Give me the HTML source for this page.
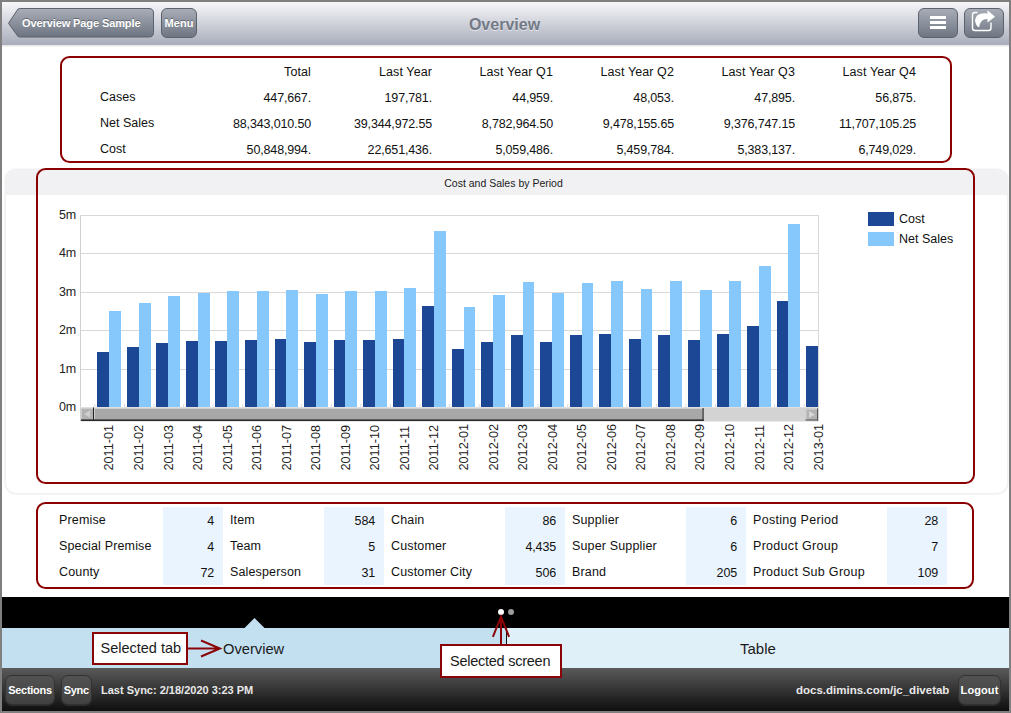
<!DOCTYPE html>
<html><head><meta charset="utf-8"><title>Overview</title>
<style>
html,body{margin:0;padding:0;}
body{width:1011px;height:713px;position:relative;overflow:hidden;background:#7f7f7f;font-family:"Liberation Sans",sans-serif;}
#app{position:absolute;left:2px;top:2px;width:1007px;height:708.5px;background:#fff;overflow:hidden;}
.abs{position:absolute;}
#hdr{position:absolute;left:2px;top:2px;width:1007px;height:43px;background:linear-gradient(#f7f7fa,#a8adba);}
#title{position:absolute;left:-1px;width:1011px;top:15px;text-align:center;font-weight:bold;font-size:16px;color:#737987;text-shadow:0 1px 0 rgba(255,255,255,.6);line-height:20px;}
.btn{position:absolute;box-sizing:border-box;border:1px solid #5b616d;border-radius:6px;background:linear-gradient(#a7acb6,#6f7683);color:#fff;font-weight:bold;font-size:12px;text-align:center;text-shadow:0 -1px 0 rgba(0,0,0,.35);}
.t{position:absolute;font-size:12.5px;line-height:18px;color:#111;white-space:nowrap;}
.t.r{width:150px;text-align:right;letter-spacing:-0.15px;}
.box{position:absolute;box-sizing:border-box;border:2px solid #8b0000;border-radius:9.5px;}
.dbtn{position:absolute;box-sizing:border-box;border:1px solid #333;border-radius:7px;background:linear-gradient(#525252,#414141);color:#fff;font-weight:bold;font-size:11px;letter-spacing:-0.3px;text-align:center;line-height:28px;box-shadow:0 1px 0 rgba(255,255,255,.08);}
.bt{position:absolute;color:#e8e8e8;font-weight:bold;white-space:nowrap;}
.call{position:absolute;box-sizing:border-box;border:2px solid #8b0508;background:#fff;font-size:14.5px;color:#1a1a1a;white-space:nowrap;}
</style></head><body>
<div id="app"></div>
<div id="hdr"></div>
<div class="abs" style="left:2px;top:45px;width:1007px;height:2px;background:linear-gradient(#e3e3e7,#f6f6f6);"></div>
<div id="title">Overview</div>
<!-- back button -->
<svg class="abs" style="left:0;top:0" width="210" height="46" viewBox="0 0 210 46">
<defs><linearGradient id="bg1" x1="0" y1="0" x2="0" y2="1"><stop offset="0" stop-color="#a9aeb8"/><stop offset="1" stop-color="#6d7481"/></linearGradient></defs>
<path d="M8.5 23.3 L18 9 Q19 8.5 21 8.5 L149 8.5 Q153.500 8.5 153.500 13 L153.500 32.500 Q153.500 37 149 37 L21 37 Q19 37 18 36.500 Z" fill="url(#bg1)" stroke="#5b616d" stroke-width="1"/>
</svg>
<div class="abs" style="left:22px;top:9px;height:29px;line-height:29px;color:#fff;font-weight:bold;font-size:11px;letter-spacing:-0.1px;text-shadow:0 -1px 0 rgba(0,0,0,.35);white-space:nowrap">Overview Page Sample</div>
<div class="btn" style="left:161px;top:8px;width:36px;height:30px;line-height:28px;font-size:11px;letter-spacing:0.1px;">Menu</div>
<div class="btn" style="left:918px;top:8px;width:40px;height:30px;"></div>
<div class="btn" style="left:964px;top:8px;width:40px;height:30px;"></div>
<svg class="abs" style="left:918px;top:8px" width="90" height="30" viewBox="0 0 90 30">
<rect x="12" y="8" width="16" height="3" fill="#fff"/><rect x="12" y="13" width="16" height="3" fill="#fff"/><rect x="12" y="18" width="16" height="3" fill="#fff"/>
<path d="M59.500 4.500 L57 4.500 Q54.500 4.500 54.500 7 L54.500 20 Q54.500 22.500 57 22.500 L70.500 22.500 Q73 22.500 73 20 L73 14.500" fill="none" stroke="#fff" stroke-width="1.4"/>
<path d="M69.500 2.200 L77 8.800 L69.500 14.500 L69.500 11 Q62.500 10.500 61.200 19 L60 19 Q55.500 14 58 9 Q61 4.500 69.500 5.500 Z" fill="#fff"/>
</svg>

<!-- top table -->
<div class="box" style="left:60px;top:56px;width:892px;height:107px;"></div>
<div class="t" style="left:100px;top:87.6px">Cases</div>
<div class="t" style="left:100px;top:113.6px">Net Sales</div>
<div class="t" style="left:100px;top:139.6px">Cost</div>
<div class="t r" style="left:161px;top:62.6px;letter-spacing:0.1px">Total</div>
<div class="t r" style="left:161px;top:88.5px">447,667.</div>
<div class="t r" style="left:161px;top:114.5px">88,343,010.50</div>
<div class="t r" style="left:161px;top:140.5px">50,848,994.</div>
<div class="t r" style="left:282px;top:62.6px;letter-spacing:0.1px">Last Year</div>
<div class="t r" style="left:282px;top:88.5px">197,781.</div>
<div class="t r" style="left:282px;top:114.5px">39,344,972.55</div>
<div class="t r" style="left:282px;top:140.5px">22,651,436.</div>
<div class="t r" style="left:403px;top:62.6px;letter-spacing:0.1px">Last Year Q1</div>
<div class="t r" style="left:403px;top:88.5px">44,959.</div>
<div class="t r" style="left:403px;top:114.5px">8,782,964.50</div>
<div class="t r" style="left:403px;top:140.5px">5,059,486.</div>
<div class="t r" style="left:524px;top:62.6px;letter-spacing:0.1px">Last Year Q2</div>
<div class="t r" style="left:524px;top:88.5px">48,053.</div>
<div class="t r" style="left:524px;top:114.5px">9,478,155.65</div>
<div class="t r" style="left:524px;top:140.5px">5,459,784.</div>
<div class="t r" style="left:645px;top:62.6px;letter-spacing:0.1px">Last Year Q3</div>
<div class="t r" style="left:645px;top:88.5px">47,895.</div>
<div class="t r" style="left:645px;top:114.5px">9,376,747.15</div>
<div class="t r" style="left:645px;top:140.5px">5,383,137.</div>
<div class="t r" style="left:766px;top:62.6px;letter-spacing:0.1px">Last Year Q4</div>
<div class="t r" style="left:766px;top:88.5px">56,875.</div>
<div class="t r" style="left:766px;top:114.5px">11,707,105.25</div>
<div class="t r" style="left:766px;top:140.5px">6,749,029.</div>

<!-- chart panel -->
<div class="abs" style="left:5.500px;top:170px;width:1001px;height:322.500px;background:#fff;border-radius:10px;box-shadow:0 0 0 1.500px #f0f0f3;"></div>
<div class="abs" style="left:5.500px;top:170px;width:1001px;height:25px;background:#f1f1f4;border-radius:10px 10px 0 0;"></div>
<div class="abs" style="left:-2px;width:1011px;top:176px;text-align:center;font-size:10.5px;line-height:14px;color:#1a1a1a;">Cost and Sales by Period</div>
<svg id="chart" width="1011" height="713" viewBox="0 0 1011 713" style="position:absolute;left:0;top:0">
<rect x="80" y="215" width="739" height="192" fill="#fff"/>
<rect x="80" y="215" width="739" height="1" fill="#d8d8d8"/>
<rect x="80" y="253" width="739" height="1" fill="#d8d8d8"/>
<rect x="80" y="292" width="739" height="1" fill="#d8d8d8"/>
<rect x="80" y="330" width="739" height="1" fill="#d8d8d8"/>
<rect x="80" y="369" width="739" height="1" fill="#d8d8d8"/>
<rect x="80" y="215" width="1" height="206" fill="#d0d0d0"/>
<rect x="818" y="215" width="1" height="193" fill="#d8d8d8"/>
<rect x="80" y="407" width="739" height="1" fill="#e0e0e0"/>
<rect x="97" y="352" width="12" height="55" fill="#1b4795"/>
<rect x="109" y="311" width="12" height="96" fill="#86c8fb"/>
<rect x="127" y="347" width="12" height="60" fill="#1b4795"/>
<rect x="139" y="303" width="12" height="104" fill="#86c8fb"/>
<rect x="156" y="343" width="12" height="64" fill="#1b4795"/>
<rect x="168" y="296" width="12" height="111" fill="#86c8fb"/>
<rect x="186" y="341" width="12" height="66" fill="#1b4795"/>
<rect x="198" y="293" width="12" height="114" fill="#86c8fb"/>
<rect x="215" y="341" width="12" height="66" fill="#1b4795"/>
<rect x="227" y="291" width="12" height="116" fill="#86c8fb"/>
<rect x="245" y="340" width="12" height="67" fill="#1b4795"/>
<rect x="257" y="291" width="12" height="116" fill="#86c8fb"/>
<rect x="275" y="339" width="11" height="68" fill="#1b4795"/>
<rect x="286" y="290" width="12" height="117" fill="#86c8fb"/>
<rect x="304" y="342" width="12" height="65" fill="#1b4795"/>
<rect x="316" y="294" width="12" height="113" fill="#86c8fb"/>
<rect x="334" y="340" width="11" height="67" fill="#1b4795"/>
<rect x="345" y="291" width="12" height="116" fill="#86c8fb"/>
<rect x="363" y="340" width="12" height="67" fill="#1b4795"/>
<rect x="375" y="291" width="12" height="116" fill="#86c8fb"/>
<rect x="393" y="339" width="11" height="68" fill="#1b4795"/>
<rect x="404" y="288" width="12" height="119" fill="#86c8fb"/>
<rect x="422" y="306" width="12" height="101" fill="#1b4795"/>
<rect x="434" y="231" width="12" height="176" fill="#86c8fb"/>
<rect x="452" y="349" width="12" height="58" fill="#1b4795"/>
<rect x="464" y="307" width="11" height="100" fill="#86c8fb"/>
<rect x="481" y="342" width="12" height="65" fill="#1b4795"/>
<rect x="493" y="295" width="12" height="112" fill="#86c8fb"/>
<rect x="511" y="335" width="12" height="72" fill="#1b4795"/>
<rect x="523" y="282" width="11" height="125" fill="#86c8fb"/>
<rect x="540" y="342" width="12" height="65" fill="#1b4795"/>
<rect x="552" y="293" width="12" height="114" fill="#86c8fb"/>
<rect x="570" y="335" width="12" height="72" fill="#1b4795"/>
<rect x="582" y="283" width="11" height="124" fill="#86c8fb"/>
<rect x="599" y="334" width="12" height="73" fill="#1b4795"/>
<rect x="611" y="281" width="12" height="126" fill="#86c8fb"/>
<rect x="629" y="339" width="12" height="68" fill="#1b4795"/>
<rect x="641" y="289" width="11" height="118" fill="#86c8fb"/>
<rect x="658" y="335" width="12" height="72" fill="#1b4795"/>
<rect x="670" y="281" width="12" height="126" fill="#86c8fb"/>
<rect x="688" y="340" width="12" height="67" fill="#1b4795"/>
<rect x="700" y="290" width="12" height="117" fill="#86c8fb"/>
<rect x="717" y="334" width="12" height="73" fill="#1b4795"/>
<rect x="729" y="281" width="12" height="126" fill="#86c8fb"/>
<rect x="747" y="326" width="12" height="81" fill="#1b4795"/>
<rect x="759" y="266" width="12" height="141" fill="#86c8fb"/>
<rect x="777" y="301" width="11" height="106" fill="#1b4795"/>
<rect x="788" y="224" width="12" height="183" fill="#86c8fb"/>
<rect x="806" y="346" width="12" height="61" fill="#1b4795"/>
<rect x="94.4" y="404" width="1" height="3" fill="#dcdcdc"/>
<rect x="124.0" y="404" width="1" height="3" fill="#dcdcdc"/>
<rect x="153.5" y="404" width="1" height="3" fill="#dcdcdc"/>
<rect x="183.1" y="404" width="1" height="3" fill="#dcdcdc"/>
<rect x="212.6" y="404" width="1" height="3" fill="#dcdcdc"/>
<rect x="242.2" y="404" width="1" height="3" fill="#dcdcdc"/>
<rect x="271.7" y="404" width="1" height="3" fill="#dcdcdc"/>
<rect x="301.2" y="404" width="1" height="3" fill="#dcdcdc"/>
<rect x="330.8" y="404" width="1" height="3" fill="#dcdcdc"/>
<rect x="360.4" y="404" width="1" height="3" fill="#dcdcdc"/>
<rect x="389.9" y="404" width="1" height="3" fill="#dcdcdc"/>
<rect x="419.5" y="404" width="1" height="3" fill="#dcdcdc"/>
<rect x="449.0" y="404" width="1" height="3" fill="#dcdcdc"/>
<rect x="478.6" y="404" width="1" height="3" fill="#dcdcdc"/>
<rect x="508.1" y="404" width="1" height="3" fill="#dcdcdc"/>
<rect x="537.6" y="404" width="1" height="3" fill="#dcdcdc"/>
<rect x="567.2" y="404" width="1" height="3" fill="#dcdcdc"/>
<rect x="596.8" y="404" width="1" height="3" fill="#dcdcdc"/>
<rect x="626.3" y="404" width="1" height="3" fill="#dcdcdc"/>
<rect x="655.9" y="404" width="1" height="3" fill="#dcdcdc"/>
<rect x="685.4" y="404" width="1" height="3" fill="#dcdcdc"/>
<rect x="715.0" y="404" width="1" height="3" fill="#dcdcdc"/>
<rect x="744.5" y="404" width="1" height="3" fill="#dcdcdc"/>
<rect x="774.0" y="404" width="1" height="3" fill="#dcdcdc"/>
<rect x="803.6" y="404" width="1" height="3" fill="#dcdcdc"/>
<rect x="81" y="408" width="738" height="13.5" fill="#d3d3d3"/>
<rect x="94" y="408" width="609" height="12" fill="#a8a8a8"/>
<rect x="94" y="408" width="609" height="1" fill="#cfcfcf"/>
<rect x="94" y="408" width="1" height="12" fill="#cfcfcf"/>
<rect x="81" y="408" width="12" height="12" fill="#b2b2b2"/>
<rect x="81" y="408" width="12" height="1" fill="#cdcdcd"/>
<rect x="81" y="408" width="1" height="12" fill="#cdcdcd"/>
<rect x="93" y="407.5" width="1" height="13" fill="#222"/>
<rect x="702.5" y="408" width="1.2" height="13" fill="#333"/>
<rect x="81" y="419.4" width="622.7" height="1.6" fill="#2c2c2c"/>
<rect x="805.5" y="408.5" width="12" height="12" fill="#b2b2b2"/>
<rect x="805.5" y="408.5" width="12" height="1" fill="#d8d8d8"/>
<rect x="805.5" y="408.5" width="1" height="12" fill="#d8d8d8"/>
<rect x="805.5" y="419.5" width="12.5" height="1" fill="#555"/>
<rect x="817" y="408.5" width="1" height="12" fill="#555"/>
<path d="M90 410.5 L84 414 L90 417.5 Z" fill="#cfcfcf"/>
<path d="M809 411 L815 414.5 L809 418 Z" fill="#d6d6d6"/>
<text x="76.3" y="219" text-anchor="end" font-family="Liberation Sans, sans-serif" font-size="12.5" fill="#222">5m</text>
<text x="76.3" y="257" text-anchor="end" font-family="Liberation Sans, sans-serif" font-size="12.5" fill="#222">4m</text>
<text x="76.3" y="296" text-anchor="end" font-family="Liberation Sans, sans-serif" font-size="12.5" fill="#222">3m</text>
<text x="76.3" y="334" text-anchor="end" font-family="Liberation Sans, sans-serif" font-size="12.5" fill="#222">2m</text>
<text x="76.3" y="373" text-anchor="end" font-family="Liberation Sans, sans-serif" font-size="12.5" fill="#222">1m</text>
<text x="76.3" y="411" text-anchor="end" font-family="Liberation Sans, sans-serif" font-size="12.5" fill="#222">0m</text>
<text transform="translate(113.4,470.5) rotate(-90)" font-family="Liberation Sans, sans-serif" font-size="12.7" fill="#222">2011-01</text>
<text transform="translate(143.0,470.5) rotate(-90)" font-family="Liberation Sans, sans-serif" font-size="12.7" fill="#222">2011-02</text>
<text transform="translate(172.5,470.5) rotate(-90)" font-family="Liberation Sans, sans-serif" font-size="12.7" fill="#222">2011-03</text>
<text transform="translate(202.1,470.5) rotate(-90)" font-family="Liberation Sans, sans-serif" font-size="12.7" fill="#222">2011-04</text>
<text transform="translate(231.6,470.5) rotate(-90)" font-family="Liberation Sans, sans-serif" font-size="12.7" fill="#222">2011-05</text>
<text transform="translate(261.1,470.5) rotate(-90)" font-family="Liberation Sans, sans-serif" font-size="12.7" fill="#222">2011-06</text>
<text transform="translate(290.7,470.5) rotate(-90)" font-family="Liberation Sans, sans-serif" font-size="12.7" fill="#222">2011-07</text>
<text transform="translate(320.2,470.5) rotate(-90)" font-family="Liberation Sans, sans-serif" font-size="12.7" fill="#222">2011-08</text>
<text transform="translate(349.8,470.5) rotate(-90)" font-family="Liberation Sans, sans-serif" font-size="12.7" fill="#222">2011-09</text>
<text transform="translate(379.3,470.5) rotate(-90)" font-family="Liberation Sans, sans-serif" font-size="12.7" fill="#222">2011-10</text>
<text transform="translate(408.9,470.5) rotate(-90)" font-family="Liberation Sans, sans-serif" font-size="12.7" fill="#222">2011-11</text>
<text transform="translate(438.4,470.5) rotate(-90)" font-family="Liberation Sans, sans-serif" font-size="12.7" fill="#222">2011-12</text>
<text transform="translate(468.0,470.5) rotate(-90)" font-family="Liberation Sans, sans-serif" font-size="12.7" fill="#222">2012-01</text>
<text transform="translate(497.6,470.5) rotate(-90)" font-family="Liberation Sans, sans-serif" font-size="12.7" fill="#222">2012-02</text>
<text transform="translate(527.1,470.5) rotate(-90)" font-family="Liberation Sans, sans-serif" font-size="12.7" fill="#222">2012-03</text>
<text transform="translate(556.6,470.5) rotate(-90)" font-family="Liberation Sans, sans-serif" font-size="12.7" fill="#222">2012-04</text>
<text transform="translate(586.2,470.5) rotate(-90)" font-family="Liberation Sans, sans-serif" font-size="12.7" fill="#222">2012-05</text>
<text transform="translate(615.8,470.5) rotate(-90)" font-family="Liberation Sans, sans-serif" font-size="12.7" fill="#222">2012-06</text>
<text transform="translate(645.3,470.5) rotate(-90)" font-family="Liberation Sans, sans-serif" font-size="12.7" fill="#222">2012-07</text>
<text transform="translate(674.9,470.5) rotate(-90)" font-family="Liberation Sans, sans-serif" font-size="12.7" fill="#222">2012-08</text>
<text transform="translate(704.4,470.5) rotate(-90)" font-family="Liberation Sans, sans-serif" font-size="12.7" fill="#222">2012-09</text>
<text transform="translate(734.0,470.5) rotate(-90)" font-family="Liberation Sans, sans-serif" font-size="12.7" fill="#222">2012-10</text>
<text transform="translate(763.5,470.5) rotate(-90)" font-family="Liberation Sans, sans-serif" font-size="12.7" fill="#222">2012-11</text>
<text transform="translate(793.0,470.5) rotate(-90)" font-family="Liberation Sans, sans-serif" font-size="12.7" fill="#222">2012-12</text>
<text transform="translate(822.6,470.5) rotate(-90)" font-family="Liberation Sans, sans-serif" font-size="12.7" fill="#222">2013-01</text>
<rect x="868" y="212" width="26" height="14" fill="#1b4795"/>
<rect x="868" y="232" width="26" height="14" fill="#86c8fb"/>
</svg>
<div class="t" style="left:899px;top:209.700px;">Cost</div>
<div class="t" style="left:899px;top:229.500px;">Net Sales</div>
<div class="box" style="left:36px;top:168px;width:939px;height:316px;"></div>

<!-- bottom table -->
<div class="box" style="left:36px;top:502px;width:938px;height:87px;"></div>
<div style="position:absolute;left:163px;top:507px;width:60px;height:78px;background:#eaf4fe"></div>
<div class="t" style="left:59px;top:511.3px;letter-spacing:0.15px">Premise</div>
<div class="t r" style="left:64.0px;top:512.1px">4</div>
<div class="t" style="left:59px;top:537.3px;letter-spacing:0.15px">Special Premise</div>
<div class="t r" style="left:64.0px;top:538.1px">4</div>
<div class="t" style="left:59px;top:563.3px;letter-spacing:0.15px">County</div>
<div class="t r" style="left:64.0px;top:564.1px">72</div>
<div style="position:absolute;left:324px;top:507px;width:60px;height:78px;background:#eaf4fe"></div>
<div class="t" style="left:230px;top:511.3px;letter-spacing:0.15px">Item</div>
<div class="t r" style="left:225.0px;top:512.1px">584</div>
<div class="t" style="left:230px;top:537.3px;letter-spacing:0.15px">Team</div>
<div class="t r" style="left:225.0px;top:538.1px">5</div>
<div class="t" style="left:230px;top:563.3px;letter-spacing:0.15px">Salesperson</div>
<div class="t r" style="left:225.0px;top:564.1px">31</div>
<div style="position:absolute;left:505px;top:507px;width:60px;height:78px;background:#eaf4fe"></div>
<div class="t" style="left:391px;top:511.3px;letter-spacing:0.15px">Chain</div>
<div class="t r" style="left:406.0px;top:512.1px">86</div>
<div class="t" style="left:391px;top:537.3px;letter-spacing:0.15px">Customer</div>
<div class="t r" style="left:406.0px;top:538.1px">4,435</div>
<div class="t" style="left:391px;top:563.3px;letter-spacing:0.15px">Customer City</div>
<div class="t r" style="left:406.0px;top:564.1px">506</div>
<div style="position:absolute;left:686px;top:507px;width:60px;height:78px;background:#eaf4fe"></div>
<div class="t" style="left:572px;top:511.3px;letter-spacing:0.15px">Supplier</div>
<div class="t r" style="left:587.0px;top:512.1px">6</div>
<div class="t" style="left:572px;top:537.3px;letter-spacing:0.15px">Super Supplier</div>
<div class="t r" style="left:587.0px;top:538.1px">6</div>
<div class="t" style="left:572px;top:563.3px;letter-spacing:0.15px">Brand</div>
<div class="t r" style="left:587.0px;top:564.1px">205</div>
<div style="position:absolute;left:887px;top:507px;width:60px;height:78px;background:#eaf4fe"></div>
<div class="t" style="left:753px;top:511.3px;letter-spacing:0.30px">Posting Period</div>
<div class="t r" style="left:788.0px;top:512.1px">28</div>
<div class="t" style="left:753px;top:537.3px;letter-spacing:0.30px">Product Group</div>
<div class="t r" style="left:788.0px;top:538.1px">7</div>
<div class="t" style="left:753px;top:563.3px;letter-spacing:0.30px">Product Sub Group</div>
<div class="t r" style="left:788.0px;top:564.1px">109</div>

<!-- black bar -->
<div class="abs" style="left:2px;top:597px;width:1007px;height:31px;background:#000;"></div>
<div class="abs" style="left:498.200px;top:609.200px;width:5.600px;height:5.600px;border-radius:3px;background:#fff;"></div>
<div class="abs" style="left:508.300px;top:609.300px;width:5.400px;height:5.400px;border-radius:3px;background:#9c9c9c;"></div>
<!-- tab bar -->
<div class="abs" style="left:2px;top:628px;width:504px;height:40px;background:#c3e0f1;"></div>
<div class="abs" style="left:506px;top:628px;width:503px;height:40px;background:#e0f0f8;border-left:1px solid #111;box-sizing:border-box;"></div>
<svg class="abs" style="left:240px;top:615px" width="30" height="14" viewBox="0 0 30 14"><path d="M4.500 13 L14.500 3 L24.500 13 Z" fill="#c3e0f1"/></svg>
<div class="abs" style="left:223px;top:639px;font-size:14.700px;line-height:20px;color:#1a1a1a;">Overview</div>
<div class="abs" style="left:740px;top:639px;font-size:15px;line-height:20px;color:#1a1a1a;">Table</div>
<!-- bottom bar -->
<div class="abs" style="left:2px;top:668px;width:1007px;height:42.500px;background:linear-gradient(#5a5a5a,#0e0e0e);"></div>
<div class="dbtn" style="left:5px;top:675px;width:50px;height:30px;">Sections</div>
<div class="dbtn" style="left:61px;top:675px;width:30.500px;height:30px;">Sync</div>
<div class="dbtn" style="left:958px;top:675px;width:43px;height:30px;letter-spacing:0.1px;">Logout</div>
<div class="bt" style="left:101px;top:683px;font-size:11px;line-height:14px;">Last Sync: 2/18/2020 3:23 PM</div>
<div class="bt" style="left:796px;top:682px;font-size:11.500px;line-height:16px;">docs.dimins.com/jc_divetab</div>
<!-- callouts -->
<div class="call" style="left:92px;top:632px;width:96px;height:32.500px;line-height:29px;padding-left:6.500px;">Selected tab</div>
<svg class="abs" style="left:186px;top:636px" width="40" height="26" viewBox="0 0 40 26"><path d="M1 12.500 L33 12.500 M15 4.500 L34 12.500 L15 20.500" fill="none" stroke="#8b0508" stroke-width="2"/></svg>
<div class="call" style="left:440px;top:643.800px;width:122px;height:34.500px;line-height:31.500px;padding-left:8px;letter-spacing:-0.250px;">Selected screen</div>
<svg class="abs" style="left:488px;top:612px" width="26" height="36" viewBox="0 0 26 36"><path d="M13 34 L13 6 M4.900 24.800 L13 4.600 L21.100 24.800" fill="none" stroke="#8b0508" stroke-width="2"/></svg>
</body></html>
